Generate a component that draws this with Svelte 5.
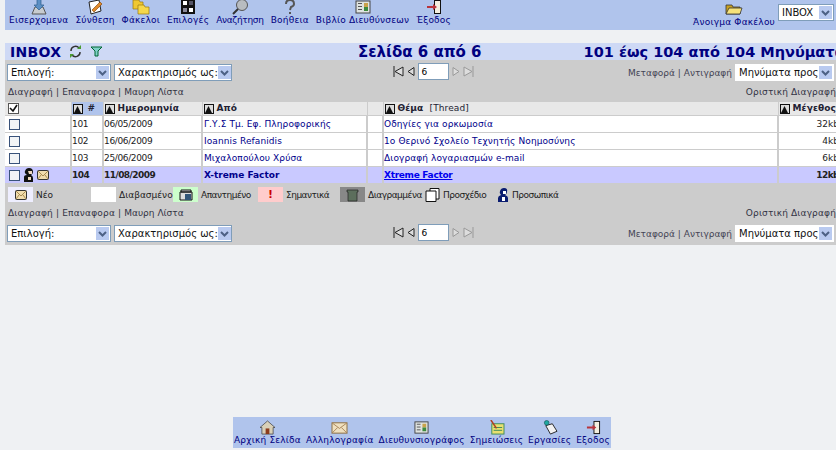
<script>
    const tools = [
        { label: 'Εισερχομενα', icon: 'inbox' },
        { label: 'Σύνθεση', icon: 'compose' },
        { label: 'Φάκελοι', icon: 'folders' },
        { label: 'Επιλογές', icon: 'options' },
        { label: 'Αναζήτηση', icon: 'search' },
        { label: 'Βοήθεια', icon: 'help' },
        { label: 'Βιβλίο Διευθύνσεων', icon: 'book' },
        { label: 'Έξοδος', icon: 'exit' }
    ];

    const bottom = [
        { label: 'Αρχική Σελίδα', icon: 'home' },
        { label: 'Αλληλογραφία', icon: 'mail' },
        { label: 'Διευθυνσιογράφος', icon: 'book' },
        { label: 'Σημειώσεις', icon: 'notes' },
        { label: 'Εργασίες', icon: 'tasks' },
        { label: 'Εξοδος', icon: 'exit' }
    ];

    const messages = [
        { id: 101, date: '06/05/2009', from: 'Γ.Υ.Σ Τμ. Εφ. Πληροφορικής', subject: 'Οδηγίες για ορκωμοσία', size: '32kb' },
        { id: 102, date: '16/06/2009', from: 'Ioannis Refanidis', subject: '1ο Θερινό Σχολείο Τεχνητής Νοημοσύνης', size: '4kb' },
        { id: 103, date: '25/06/2009', from: 'Μιχαλοπούλου Χρύσα', subject: 'Διογραφή λογαριασμών e-mail', size: '6kb' },
        { id: 104, date: '11/08/2009', from: 'X-treme Factor', subject: 'Xtreme Factor', size: '12kb', unread: true }
    ];
</script>

{#snippet icon(name, w = 18, h = 16)}
    <svg width={w} height={h} viewBox="0 0 18 16" aria-hidden="true">
        {#if name === 'inbox'}
            <path d="M2 15 L5 8 H13 L16 15 Z" fill="#c8ccd0" stroke="#555" stroke-width="1" />
            <path d="M7 0 H11 V6 H14 L9 11 L4 6 H7 Z" fill="#5b8fc4" stroke="#2d5c8c" stroke-width=".7" />
        {:else if name === 'compose'}
            <path d="M3 3 L13 1 L15 12 L5 15 Z" fill="#fff" stroke="#222" />
            <path d="M6 11 L14 3 L16 5 L8 13 Z" fill="#e08a2c" stroke="#7a3c00" stroke-width=".6" />
        {:else if name === 'folders'}
            <path d="M1 1 H7 L8 3 H11 V10 H1 Z" fill="#f0c830" stroke="#9a7a10" stroke-width=".7" />
            <path d="M6 6 H12 L13 8 H17 V15 H6 Z" fill="#f6d84a" stroke="#9a7a10" stroke-width=".7" />
        {:else if name === 'options'}
            <rect x="2" y="0" width="14" height="15" fill="#111" />
            <rect x="4" y="2" width="4" height="4" fill="#fff" />
            <rect x="10" y="9" width="4" height="4" fill="#fff" />
            <rect x="10" y="2" width="4" height="4" fill="#556" />
            <rect x="4" y="9" width="4" height="4" fill="#889" />
        {:else if name === 'search'}
            <circle cx="11" cy="6" r="5.5" fill="#b8bcc0" stroke="#555" />
            <path d="M7 10 L2 15" stroke="#333" stroke-width="2" />
        {:else if name === 'help'}
            <path d="M5 5 Q5 1 9 1 Q13 1 13 5 Q13 7 10 8 L9 11" fill="none" stroke="#555" stroke-width="2" />
            <rect x="8" y="13" width="2" height="2" fill="#555" />
        {:else if name === 'book'}
            <rect x="2" y="2" width="14" height="12" fill="#dfe3e0" stroke="#444" />
            <rect x="4" y="4" width="4" height="1" fill="#555" />
            <rect x="4" y="7" width="4" height="1" fill="#555" />
            <rect x="4" y="10" width="4" height="1" fill="#555" />
            <rect x="10" y="4" width="4" height="4" fill="#c9a24a" />
            <rect x="10" y="8" width="4" height="4" fill="#3d8a3d" />
        {:else if name === 'exit'}
            <path d="M9 1 H16 V15 H9 Z" fill="#111" />
            <rect x="10" y="2" width="5" height="12" fill="#f4efe0" />
            <path d="M2 7 H8 V5 L12 8 L8 11 V9 H2 Z" fill="#b8343c" />
        {:else if name === 'home'}
            <path d="M1 8 L9 1 L17 8 L15 8 V15 H3 V8 Z" fill="#d8d0b8" stroke="#444" stroke-width=".8" />
            <rect x="7" y="9" width="4" height="6" fill="#8c3c1c" />
        {:else if name === 'mail'}
            <rect x="1" y="3" width="16" height="11" fill="#efe0c0" stroke="#8a6a3a" />
            <path d="M1 3 L9 9 L17 3 M1 14 L7 8 M17 14 L11 8" fill="none" stroke="#a8845a" />
        {:else if name === 'notes'}
            <rect x="4" y="4" width="13" height="11" fill="#e8e070" stroke="#3a8a5a" />
            <path d="M6 8 H15 M6 11 H15" stroke="#3a8a5a" />
            <path d="M3 0 L9 9" stroke="#b04020" stroke-width="1.6" />
        {:else if name === 'tasks'}
            <path d="M5 6 L12 4 L17 12 L10 15 Z" fill="#f2f2f2" stroke="#222" />
            <circle cx="6" cy="3" r="2.5" fill="#1fa8a0" stroke="#0a4a48" stroke-width=".6" />
        {/if}
    </svg>
{/snippet}

{#snippet sort()}
    <span class="sort">
        <svg width="7" height="7" viewBox="0 0 7 7" aria-hidden="true"><path d="M3.5 0 L7 7 H0 Z" fill="#111" /></svg>
    </span>
{/snippet}

{#snippet envelope()}
    <svg width="12" height="10" viewBox="0 0 12 10" aria-hidden="true">
        <rect x=".5" y=".5" width="11" height="9" rx="1" fill="#f0dcae" stroke="#333" />
        <path d="M1 1 L6 6 L11 1 M1 9 L4 5 M11 9 L8 5" fill="none" stroke="#a88a50" />
    </svg>
{/snippet}

{#snippet person()}
    <svg width="11" height="14" viewBox="0 0 11 14" aria-hidden="true">
        <path d="M1 14 V9 Q1 7 4 7 Q1 5 2 3 Q3 0 6 0 Q10 0 10 4 Q10 6 8 7 Q10 8 10 10 V14 Z" fill="#111" />
        <path d="M5 3 H9 V6 H6 Z M5 9 H8 V12 H5 Z" fill="#f0d8c0" />
    </svg>
{/snippet}

{#snippet select(text, width, plain = false)}
    <div class="select" class:plain style="width:{width}px">
        <span>{text}</span>
        <span class="arrow">
            <svg width="9" height="6" viewBox="0 0 9 6" aria-hidden="true"><path d="M1 1 L4.5 4.5 L8 1" fill="none" stroke="#4d6185" stroke-width="2" /></svg>
        </span>
    </div>
{/snippet}

{#snippet pager()}
    <div class="pager">
        <svg width="11" height="11" viewBox="0 0 11 11" aria-hidden="true"><path d="M1 0 V11 M10 1 L2 5.5 L10 10 Z" fill="#ddd" stroke="#222" /></svg>
        <svg width="8" height="9" viewBox="0 0 8 9" aria-hidden="true"><path d="M7 .5 L1 4.5 L7 8.5 Z" fill="#ddd" stroke="#222" /></svg>
        <input value="6" readonly />
        <svg width="8" height="9" viewBox="0 0 8 9" aria-hidden="true"><path d="M1 .5 L7 4.5 L1 8.5 Z" fill="#ddd" stroke="#999" /></svg>
        <svg width="11" height="11" viewBox="0 0 11 11" aria-hidden="true"><path d="M10 0 V11 M1 1 L9 5.5 L1 10 Z" fill="#ddd" stroke="#999" /></svg>
    </div>
{/snippet}

{#snippet controls()}
    <div class="controls">
        <div class="selects">
            {@render select('Επιλογή:', 104)}
            {@render select('Χαρακτηρισμός ως:', 118)}
        </div>
        {@render pager()}
        <div class="move">
            <span>Μεταφορά | Αντιγραφή</span>
            {@render select('Μηνύματα προς', 99, true)}
        </div>
    </div>
{/snippet}

{#snippet links()}
    <div class="links">
        <div class="actions">
            <span>Διαγραφή</span><span>|</span><span>Επαναφορα</span><span>|</span><span>Μαυρη Λίστα</span>
        </div>
        <span>Οριστική Διαγραφή</span>
    </div>
{/snippet}

<div class="page">
    <nav class="toolbar">
        <div class="tools">
            {#each tools as tool}
                <a class="tool" href="#top">
                    {@render icon(tool.icon)}
                    <span>{tool.label}</span>
                </a>
            {/each}
        </div>
        <div class="open">
            <a class="tool" href="#top">
                <svg width="18" height="12" viewBox="0 0 18 12" aria-hidden="true"><path d="M1 2 H7 L8 4 H15 V11 H1 Z" fill="#c8a020" stroke="#333" stroke-width=".8" /><path d="M4 5 H17 L15 11 H1 Z" fill="#f6e27a" stroke="#333" stroke-width=".8" /></svg>
                <span>Άνοιγμα Φακέλου</span>
            </a>
            {@render select('INBOX', 56)}
        </div>
    </nav>

    <header class="title">
        <div class="inbox">
            <strong>INBOX</strong>
            <svg width="13" height="13" viewBox="0 0 13 13" aria-hidden="true"><path d="M2 6 A4.5 4.5 0 0 1 10 3 M11 7 A4.5 4.5 0 0 1 3 10" fill="none" stroke="#333" stroke-width="1.5" /><path d="M8 4 H12 V0 Z" fill="#4a9a30" /><path d="M5 9 H1 V13 Z" fill="#4a9a30" /></svg>
            <svg width="13" height="11" viewBox="0 0 13 11" aria-hidden="true"><path d="M1 1 H12 L8 5 V10 L5 10 V5 Z" fill="#7fd0c8" stroke="#063" /></svg>
        </div>
        <strong class="center">Σελίδα 6 από 6</strong>
        <strong class="range">101 έως 104 από 104 Μηνύματα</strong>
    </header>

    <section class="panel">
        {@render controls()}
        {@render links()}

        <table>
            <colgroup>
                <col style="width:66px" /><col style="width:32px" /><col style="width:99px" />
                <col style="width:165px" /><col style="width:16px" /><col style="width:395px" /><col style="width:66px" />
            </colgroup>
            <thead>
                <tr>
                    <th><span class="allbox"><svg width="9" height="9" viewBox="0 0 9 9" aria-hidden="true"><path d="M1 4 L4 7 L8 1" fill="none" stroke="#111" stroke-width="1.6" /></svg></span></th>
                    <th class="sorted">{@render sort()}<span class="hash">#</span></th>
                    <th>{@render sort()}Ημερομηνία</th>
                    <th>{@render sort()}Από</th>
                    <th></th>
                    <th>{@render sort()}Θέμα <span class="thread">[Thread]</span></th>
                    <th>{@render sort()}Μέγεθος</th>
                </tr>
            </thead>
            <tbody>
                {#each messages as m}
                    <tr class:unread={m.unread}>
                        <td>
                            <div class="flags">
                                <span class="check"></span>
                                {#if m.unread}{@render person()}{@render envelope()}{/if}
                            </div>
                        </td>
                        <td class="num">{m.id}</td>
                        <td class="num">{m.date}</td>
                        <td class="link from">{m.from}</td>
                        <td></td>
                        <td class="link subject">{m.subject}</td>
                        <td class="size">{m.size}</td>
                    </tr>
                {/each}
            </tbody>
        </table>

        <div class="legend">
            <span class="swatch new">{@render envelope()}</span><span class="label" style="width:52px">Νέο</span>
            <span class="swatch read"></span><span class="label" style="width:51px">Διαβασμένο</span>
            <span class="swatch replied">
                <svg width="14" height="12" viewBox="0 0 14 12" aria-hidden="true"><path d="M2 1 H12 V3 H2 Z M1 3 H13 V11 H1 Z" fill="#ddd" stroke="#111" /><rect x="6" y="5" width="6" height="6" fill="#357" /></svg>
            </span><span class="label tight" style="width:54px">Απαντημένο</span>
            <span class="swatch important">!</span><span class="label tight" style="width:51px">Σημαντικά</span>
            <span class="swatch deleted">
                <svg width="13" height="14" viewBox="0 0 13 14" aria-hidden="true"><path d="M1 2 H12 V4 H11 V13 H2 V4 H1 Z" fill="#5c6e5c" stroke="#222" stroke-width=".7" /></svg>
            </span><span class="label tight" style="width:54px">Διαγραμμένα</span>
            <svg width="15" height="14" viewBox="0 0 15 14" aria-hidden="true"><path d="M5 .5 H14 V11 H11 V13.5 H1 V3 H5 Z M5 3 H11 V11" fill="#fff" stroke="#111" /></svg><span class="label tight" style="width:51px">Προσχέδιο</span>
            <svg width="12" height="14" viewBox="0 0 12 14" aria-hidden="true"><path d="M1 14 V10 Q1 8 4 7 Q2 5 3 3 Q4 0 7 0 Q11 0 10 4 Q10 6 8 7 Q11 8 11 10 V14 Z" fill="#0a1c70" /><path d="M6 3 H9 V6 H6 Z M5 9 H8 V13 H5 Z" fill="#fff" /></svg><span class="label tight">Προσωπικά</span>
        </div>

        {@render links()}
        {@render controls()}
    </section>

    <footer class="bottom">
        {#each bottom as item}
            <a class="tool" href="#top">
                {@render icon(item.icon, 17, 15)}
                <span>{item.label}</span>
            </a>
        {/each}
    </footer>
</div>

<style>
    :global(body) {
        background: #eff1f3;
        overflow: hidden;
    }
    .page {
        width: 836px;
        height: 450px;
        box-sizing: border-box;
        padding-left: 5px;
        overflow: hidden;
        font-family: "DejaVu Sans", sans-serif;
        font-size: 9px;
        color: #222;
    }
    a {
        text-decoration: none;
        color: #000080;
    }

    .toolbar {
        display: flex;
        justify-content: space-between;
        height: 30px;
        background: #b0c4ec;
        padding-right: 2px;
        margin-bottom: 13px;
    }
    .tools {
        display: flex;
        gap: 7px;
        padding-left: 4px;
    }
    .tool {
        display: flex;
        flex-direction: column;
        align-items: center;
        white-space: nowrap;
        letter-spacing: .2px;
    }
    .tools .tool {
        margin-top: -1px;
    }
    .tools .tool:nth-child(5) {
        letter-spacing: -.3px;
    }
    .open {
        display: flex;
        align-items: flex-start;
        gap: 3px;
        padding-top: 4px;
    }
    .open .tool {
        margin-top: -2px;
        padding-top: 1px;
        gap: 2px;
    }

    .title {
        display: flex;
        align-items: center;
        height: 17px;
        background: #ced9f5;
        color: #000080;
        font-size: 15px;
        white-space: nowrap;
        width: 831px;
    }
    .title > * {
        flex: none;
    }
    .inbox {
        box-sizing: border-box;
        width: 353px;
        display: flex;
        align-items: center;
        gap: 8px;
        padding-left: 5px;
    }
    .inbox strong {
        font-size: 14px;
        letter-spacing: .3px;
    }
    .range {
        margin-left: 102px;
        font-size: 14.5px;
    }

    .panel {
        background: #ccc;
        height: 185px;
    }
    .controls {
        display: flex;
        align-items: center;
        justify-content: space-between;
        height: 25px;
        padding: 0 2px 0 2px;
    }
    .links + .controls {
        margin-top: -2px;
    }
    .selects,
    .move {
        display: flex;
        align-items: center;
        gap: 3px;
    }
    .move {
        color: #445;
    }
    .select {
        box-sizing: border-box;
        height: 17px;
        display: flex;
        align-items: center;
        justify-content: space-between;
        padding: 1px 1px 1px 3px;
        background: #fff;
        border: 1px solid #7f9db9;
        font-size: 10px;
        color: #111;
        white-space: nowrap;
        overflow: hidden;
    }
    .select.plain {
        border-color: #ccc #fff #fff;
        border-width: 0 1px;
    }
    .arrow {
        flex: none;
        box-sizing: border-box;
        display: flex;
        align-items: center;
        justify-content: center;
        width: 13px;
        height: 13px;
        background: #b9caf0;
    }
    .pager {
        display: flex;
        align-items: center;
        gap: 3px;
        margin-left: 8px;
        margin-top: -2px;
    }
    .pager input {
        box-sizing: border-box;
        width: 31px;
        height: 17px;
        padding: 0 2px;
        border: 1px solid #7f9db9;
        font: 9px "DejaVu Sans", sans-serif;
        margin: 0;
    }

    .links {
        display: flex;
        justify-content: space-between;
        height: 17px;
        line-height: 15px;
        padding-left: 3px;
        color: #334;
        white-space: nowrap;
        letter-spacing: .15px;
    }
    .actions {
        display: flex;
        gap: 3px;
    }
    .actions span:nth-child(3) {
        letter-spacing: .2px;
    }
    .actions span:last-child {
        letter-spacing: 0;
    }

    table {
        width: 839px;
        table-layout: fixed;
        border-collapse: collapse;
        background: #fff;
    }
    th {
        height: 13px;
        padding: 0 0 0 1px;
        text-align: left;
        background: #e8e8e8;
        color: #223;
        font-size: 9px;
        font-weight: bold;
        white-space: nowrap;
        letter-spacing: .1px;
    }
    th.sorted {
        background: #b0c4ec;
    }
    td {
        height: 16px;
        padding: 0;
        border-top: 1px solid #ccc;
        border-left: 2px solid #ccc;
        white-space: nowrap;
        overflow: hidden;
    }
    td:first-child {
        border-left: 0;
    }
    th:nth-child(n + 2) {
        border-left: 1px solid #ccc;
    }
    .sort {
        display: inline-flex;
        align-items: center;
        justify-content: center;
        vertical-align: -2px;
        width: 10px;
        height: 10px;
        background: #ddd;
        border: 1px solid #111;
        margin-right: 3px;
        box-sizing: border-box;
    }
    .hash {
        margin-left: 2px;
        font-style: italic;
    }
    .thread {
        font-weight: normal;
        margin-left: 3px;
    }
    .allbox {
        display: inline-flex;
        width: 9px;
        height: 9px;
        border: 1px solid #555;
        background: #fff;
        vertical-align: top;
        margin: 0 0 0 2px;
    }
    .flags {
        display: flex;
        align-items: center;
        gap: 3px;
        padding-left: 4px;
    }
    .check {
        width: 9px;
        height: 9px;
        border: 1px solid #39527a;
        background: #f2f4f6;
    }
    .num {
        letter-spacing: -.35px;
    }
    .link {
        color: #00008b;
        letter-spacing: .1px;
    }
    .from {
        padding-left: 1px;
    }
    .size {
        text-align: right;
        padding-right: 5px;
    }
    tr.unread td {
        background: #c9c9ff;
        font-weight: bold;
        letter-spacing: -.55px;
    }
    tr.unread .from {
        letter-spacing: 0;
    }
    tr.unread .subject {
        color: #0000ee;
        text-decoration: underline;
        letter-spacing: -.3px;
    }

    .legend {
        display: flex;
        align-items: center;
        gap: 3px;
        height: 23px;
        padding-left: 3px;
        white-space: nowrap;
    }
    .label.tight {
        letter-spacing: -.5px;
    }
    .swatch {
        display: inline-flex;
        align-items: center;
        justify-content: center;
        width: 25px;
        height: 15px;
    }
    .new {
        background: #eeeeff;
    }
    .read {
        background: #fff;
    }
    .replied {
        background: #ccffcc;
    }
    .important {
        background: #ffcccc;
        color: #c00;
        font-weight: bold;
        font-size: 11px;
    }
    .deleted {
        background: #888;
    }

    .bottom {
        box-sizing: border-box;
        position: absolute;
        left: 233px;
        top: 417px;
        width: 378px;
        height: 31px;
        display: flex;
        justify-content: space-between;
        padding: 3px 1px 0;
        background: #b0c4ec;
    }
</style>
